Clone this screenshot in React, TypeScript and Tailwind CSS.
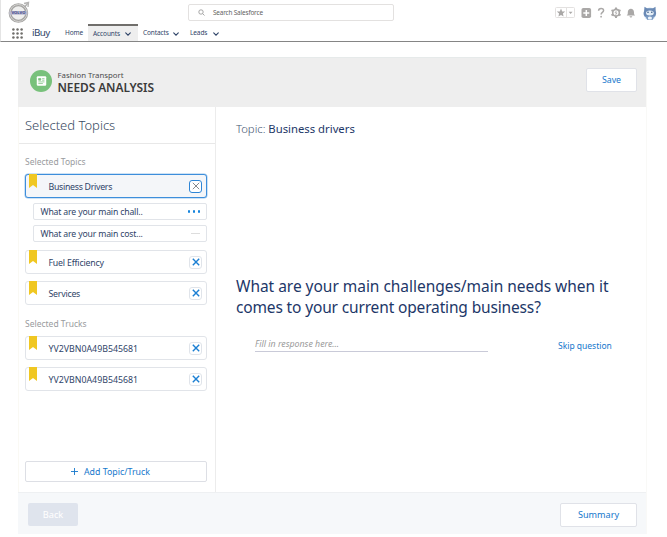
import React from "react";

const Chevron = ({ className }: { className: string }) => (
  <svg viewBox="0 0 6 4" className={`h-1 w-1.5 shrink-0 ${className}`} fill="none" stroke="#2f4468" strokeWidth="1.1" strokeLinecap="round">
    <path d="M.7 .8 3 3.1 5.3 .8" />
  </svg>
);

const Bookmark = () => (
  <svg viewBox="0 0 8 14" className="-mt-px ml-[3px] h-[14px] w-2 self-start" fill="#f0c722">
    <path d="M0 0h8v14L4 11 0 14z" />
  </svg>
);

const CloseBox = ({ active = false }: { active?: boolean }) => (
  <span
    className={`flex h-[13px] w-[13px] items-center justify-center rounded-[3px] border bg-white ${
      active ? "border-[#2f86d6]" : "border-[#e0e4ea]"
    }`}
  >
    <svg viewBox="0 0 8 8" className="h-2 w-2 shrink-0" stroke={active ? "#85888c" : "#1b7fd3"} strokeWidth={active ? 1 : 1.4}>
      <path d="M.8 .8 7.2 7.2M7.2 .8 .8 7.2" />
    </svg>
  </span>
);

const Item = ({ label, tracking, active = false }: { label: string; tracking: string; active?: boolean }) => (
  <div
    className={`flex h-6 items-center rounded-[3px] border pr-1 ${
      active ? "border-[#3d8edb] bg-[#f4f6f9] ring-[0.5px] ring-[#9cc6ec]" : "border-[#e1e4e9] bg-white"
    }`}
  >
    <Bookmark />
    <span className={`ml-[11.5px] flex-1 whitespace-nowrap pt-px text-[8.8px] leading-[12px] text-[#2f4468] ${tracking}`}>{label}</span>
    <CloseBox active={active} />
  </div>
);

const Logo = () => (
  <svg viewBox="0 0 24 24" className="h-6 w-6">
    <path d="M16 3.5 20.5 2.5 20 7" fill="none" stroke="#b5b4b3" strokeWidth="1.4" />
    <path d="M16.5 7 20.3 2.8" stroke="#b5b4b3" strokeWidth="1.6" />
    <circle cx="10.4" cy="13" r="8.3" fill="#efefee" stroke="#a5a4a2" strokeWidth="3" />
    <circle cx="10.4" cy="13" r="8.5" fill="none" stroke="#d5d4d2" strokeWidth="1" />
    <rect x="1.500" y="11.200" width="17.800" height="3.500" fill="#b9bad0" />
    <text x="10.400" y="14.200" textAnchor="middle" fontSize="3.500" fontWeight="700" textLength="14" lengthAdjust="spacingAndGlyphs" fill="#454a8c">
      VOLVO
    </text>
  </svg>
);

const Tools = () => (
  <svg viewBox="0 0 104 20" className="h-5 w-[104px]">
    <rect x=".5" y="2.500" width="19" height="10" rx="1" fill="#fff" stroke="#e3e1e0" />
    <path d="M11.500 2.500v10" stroke="#e3e1e0" />
    <path d="m6 3.500 1.200 2.900 3 .2-2.300 2 .7 3L6 10l-2.600 1.600.7-3-2.300-2 3-.2z" fill="#aaa8a7" />
    <path d="M13.700 6.800h3.800l-1.900 2.200z" fill="#aaa8a7" />
    <rect x="26.500" y="3" width="9.600" height="10" rx="1.800" fill="#aaa8a7" />
    <path d="M31.300 5v6M28.300 8h6" stroke="#fff" strokeWidth="1.500" />
    <path d="M43.600 5.800c0-3.100 5-3.200 5-.3 0 1.900-2.500 1.900-2.500 4" fill="none" stroke="#aaa8a7" strokeWidth="1.500" />
    <circle cx="46.100" cy="11.700" r=".9" fill="#aaa8a7" />
    <circle cx="61" cy="7.700" r="3.300" fill="none" stroke="#aaa8a7" strokeWidth="1.600" />
    <path d="M61 2.500v1.800M61 11.100v1.800M56.500 5.100l1.600.9M63.900 9.400l1.600.9M56.500 10.300l1.600-.9M63.900 6l1.600-.9" stroke="#aaa8a7" strokeWidth="2" />
    <path d="m61.500 5.800-1.500 2.100h2l-1.400 2" fill="none" stroke="#aaa8a7" strokeWidth=".8" />
    <path d="M71.700 10.500c1.200-.9 1.100-2 1.100-3.300 0-2 1.400-3.500 3.100-3.500S79 5.200 79 7.200c0 1.300-.1 2.400 1.100 3.300zM74.500 11.300h2.800c-.3 1.600-2.500 1.600-2.800 0z" fill="#aaa8a7" />
    <g transform="translate(0 -2.700)">
      <circle cx="94.900" cy="11.500" r="6.300" fill="#cfe0f2" />
      <path d="M89.500 4.500 92 6h6l2.500-1.500.2 4.300c.7 1.500.5 3.800-.6 5.200-1.300 1.800-9.100 1.800-10.600 0-1.100-1.400-1.100-3.800-.4-5.200z" fill="#6b8ab5" />
      <ellipse cx="94.900" cy="10.600" rx="3.900" ry="2.500" fill="#e4eef7" />
      <circle cx="93" cy="10" r=".8" fill="#365783" />
      <circle cx="96.800" cy="10" r=".8" fill="#365783" />
      <path d="M90.500 13.800h8.800l-1.600 3.700h-5.600z" fill="#7999c2" />
      <ellipse cx="94.900" cy="15.700" rx="2.100" ry="1.500" fill="#edf4fa" />
    </g>
  </svg>
);

export default function App() {
  return (
    <div className="h-[537px] w-[667px] overflow-hidden bg-white font-['Noto_Sans',sans-serif] text-[#2f4468]">
      <header className="flex h-[42px] flex-col border-b border-l border-b-[#858585] border-l-[#e4e4e4] pr-[5px]">
        <div className="flex h-6 items-start">
          <div className="ml-[7px] w-[180px]"><Logo /></div>
          <div className="mt-1 flex h-[17px] w-[206px] items-center rounded-[2px] border border-[#e3e1e0] pl-[9px] text-[6.4px] tracking-[-0.16px] text-[#626262]">
            <svg viewBox="0 0 7 7" className="mr-[8px] h-[7px] w-[7px]" fill="none" stroke="#929292" strokeWidth=".8">
              <circle cx="3" cy="3" r="2.200" /><path d="m4.700 4.700 1.800 1.800" />
            </svg>
            <span className="leading-[9px]">Search Salesforce</span>
          </div>
          <div className="ml-auto mt-[5px] h-5 w-[107px]"><Tools /></div>
        </div>
        <nav className="flex h-[17px] items-center text-[6.500px] leading-[9px] tracking-[-0.1px]">
          <svg viewBox="0 0 11 11" className="ml-[11px] mt-0.5 h-[11px] w-[11px]" fill="#706e6b">
            {[1.400, 5.500, 9.600].map((y) => [1.400, 5.500, 9.600].map((x) => <circle key={`${x}-${y}`} cx={x} cy={y} r="1.250" />))}
          </svg>
          <span className="ml-[9px] w-[33px] pt-px text-[9.800px] leading-[12px] tracking-[-0.6px]">iBuy</span>
          <span className="w-[23px]">Home</span>
          <div className="flex h-[17px] w-[50px] items-center border-t-2 border-[#706e6b] bg-[#eeeeee] pl-[5px]">
            <span className="-mt-px w-[26px]">Accounts</span><Chevron className="ml-[6px] mt-px" />
          </div>
          <span className="ml-[5px] w-[25px]">Contacts</span><Chevron className="ml-[5px] mt-[2px]" />
          <span className="ml-[11px] w-[17px]">Leads</span><Chevron className="ml-[6px] mt-[2px]" />
        </nav>
      </header>

      <main className="ml-[18px] mt-[15px] flex h-[477px] w-[629px] flex-col border-r border-[#f9f9f7]">
        <div className="flex h-[50px] shrink-0 items-center border-t border-[#e6eaea] bg-[#eeeeee] pl-3 pr-[9px]">
          <span className="-mt-[3px] flex h-[22px] w-[22px] items-center justify-center rounded-full bg-[#78c17b]">
            <svg viewBox="0 0 11 11" className="h-[10px] w-[11px]">
              <rect x=".3" y=".3" width="10.400" height="10.400" rx="1.200" fill="#fff" />
              <path d="M2.300 2.700h2.400v1.900H2.300zM6.200 2.900h2.600M6.200 4.600h2.600M2 6.500h6.800M2 8.300h5" fill="#78c17b" stroke="#78c17b" strokeWidth=".8" />
            </svg>
          </span>
          <div className="-mt-[4px] ml-[5.500px] flex flex-col">
            <span className="text-[7.800px] leading-[12px] text-[#4b4b4b]">Fashion Transport</span>
            <h1 className="text-[11.900px] font-semibold leading-[12px] tracking-[-0.06px] text-[#3a3a3a]">NEEDS ANALYSIS</h1>
          </div>
          <button className="-mt-[5px] ml-auto h-6 w-[51px] rounded-[2px] border border-[#e0e2e8] bg-white text-[8.800px] leading-none text-[#1577cc]">Save</button>
        </div>

        <div className="flex h-[385px] shrink-0">
          <aside className="flex w-[198px] shrink-0 flex-col border-l border-r border-l-[#faf9f4] border-r-[#ececec]">
            <h2 className="flex h-[37px] shrink-0 items-center border-b border-[#e8e8e8] pl-[6px] pt-px text-[13px] font-light text-[#3a4b63]">Selected Topics</h2>
            <div className="flex flex-1 flex-col pl-[6px] pr-2">
              <h3 className="mt-3 h-[18px] text-[8.500px] leading-[11px] text-[#999b9e]">Selected Topics</h3>
              <Item label="Business Drivers" tracking="tracking-[-0.3px]" active />
              <div className="ml-2 mt-[5px] flex h-[17px] items-center rounded-[2px] border border-[#e1e4e9] pl-[6.500px] pr-[6px] text-[8.700px] leading-[11px] tracking-[-0.17px]">
                <span className="flex-1 pt-0.5">What are your main chall..</span>
                <span className="flex gap-[2.500px]">
                  {[0, 1, 2].map((i) => <i key={i} className="h-[2.300px] w-[2.300px] rounded-full bg-[#1684dd]" />)}
                </span>
              </div>
              <div className="ml-2 mt-[5px] flex h-[17px] items-center rounded-[2px] border border-[#e1e4e9] pl-[6.500px] pr-[6px] text-[8.700px] leading-[11px] tracking-[-0.17px]">
                <span className="flex-1 pt-0.5">What are your main cost...</span>
                <i className="h-px w-[9px] bg-[#dddddd]" />
              </div>
              <div className="mt-2 flex flex-col gap-[7px]">
                <Item label="Fuel Efficiency" tracking="tracking-[-0.2px]" />
                <Item label="Services" tracking="tracking-[-0.25px]" />
              </div>
              <h3 className="mt-[13px] h-[18px] text-[8.500px] leading-[11px] text-[#999b9e]">Selected Trucks</h3>
              <div className="flex flex-col gap-[7px]">
                <Item label="YV2VBN0A49B545681" tracking="tracking-normal" />
                <Item label="YV2VBN0A49B545681" tracking="tracking-normal" />
              </div>
              <button className="mb-[10px] mt-auto flex h-[21px] items-center rounded-[2px] border border-[#dddfe5] pl-[45px] text-[8.800px] leading-[12px] text-[#1577cc]">
                <svg viewBox="0 0 7 7" className="mr-[6px] h-[7px] w-[7px]" stroke="#1577cc" strokeWidth=".9"><path d="M3.500 0v7M0 3.500h7" /></svg>
                <span className="pt-px">Add Topic/Truck</span>
              </button>
            </div>
          </aside>

          <section className="flex flex-1 flex-col pl-5 text-[#1d3768]">
            <p className="mt-[14px] text-[11.300px] leading-4"><span className="font-light text-[#465672]">Topic: </span>Business drivers</p>
            <h2 className="mt-[139px] whitespace-nowrap text-[15.500px] leading-[21px] tracking-[-0.03px]">
              What are your main challenges/main needs when it<br /><span className="tracking-[-0.15px]">comes to your current operating business?</span>
            </h2>
            <div className="ml-[19px] mt-[18px] flex items-start">
              <div className="h-[16px] w-[233px] border-b border-[#c9cad8] text-[8.800px] italic leading-[16px] text-[#9a9a9a]">Fill in response here...</div>
              <a className="ml-[70px] mt-1 text-[8.500px] leading-[12px] text-[#1577cc]">Skip question</a>
            </div>
          </section>
        </div>

        <footer className="flex h-[42px] shrink-0 items-center justify-between border-t border-[#eef0f2] bg-[#f6f8fa] pl-[10px] pr-[9px]">
          <button className="mt-0.5 h-[23px] w-[50px] rounded-[2px] bg-[#dfe4ed] text-[9.200px] leading-none text-white">Back</button>
          <button className="mt-0.5 h-6 w-[77px] rounded-[2px] border border-[#e0e2e8] bg-white text-[9.100px] leading-none text-[#1577cc]">Summary</button>
        </footer>
      </main>
    </div>
  );
}
